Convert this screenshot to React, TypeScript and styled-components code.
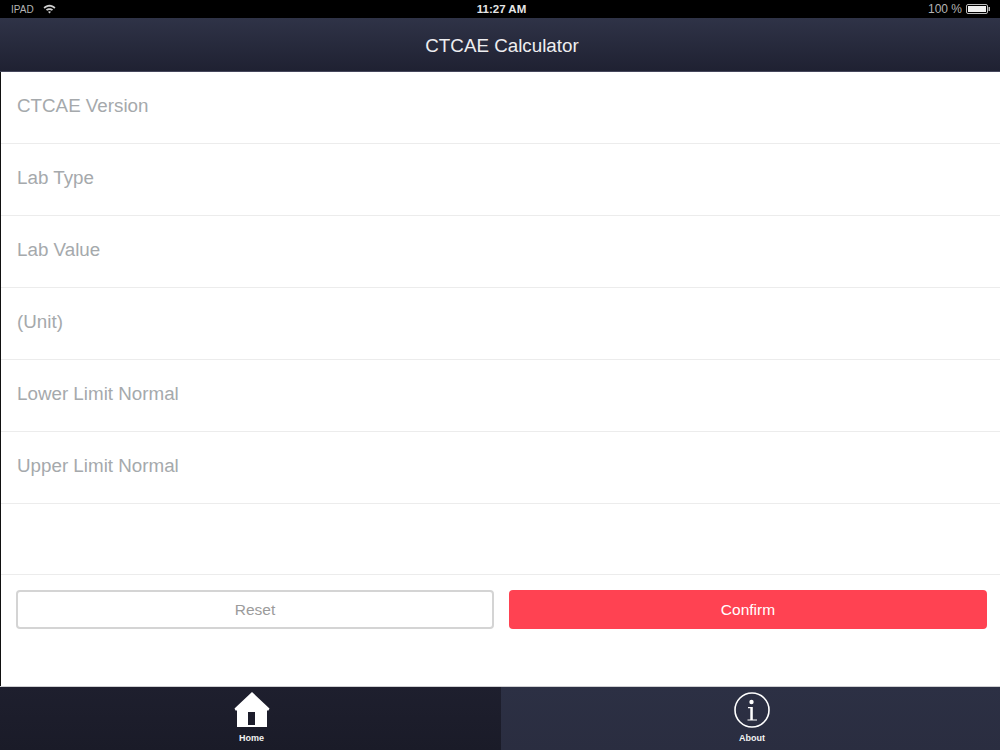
import styled, { createGlobalStyle } from 'styled-components';

const GlobalStyle = createGlobalStyle`
    html,
    body {
        margin: 0;
        padding: 0;
        background: #fff;
        font-family: 'Liberation Sans', Arial, sans-serif;
    }
`;

const Page = styled.div`
    width: 1000px;
    height: 750px;
    display: flex;
    flex-direction: column;
    overflow: hidden;
    background: #fff;
`;

const StatusBar = styled.div`
    height: 18px;
    background: #000;
    color: #b4b4b4;
    display: grid;
    grid-template-columns: 1fr auto 1fr;
    align-items: center;
    padding: 0 9px 0 11px;
    font-size: 10px;
    flex-shrink: 0;
`;

const StatusLeft = styled.div`
    display: flex;
    align-items: center;
    gap: 9px;
`;

const StatusRight = styled.div`
    display: flex;
    align-items: center;
    justify-content: flex-end;
    gap: 4px;
    font-size: 12px;
`;

const Clock = styled.div`
    color: #e6e6e6;
    font-size: 11.5px;
    font-weight: 700;
    padding-left: 1px;
`;

const NavBar = styled.header`
    height: 54px;
    flex-shrink: 0;
    box-sizing: border-box;
    background: linear-gradient(#2f3347, #1f2132);
    border-bottom: 1px solid #45475c;
    color: #eeeef0;
    font-size: 18.8px;
    display: flex;
    align-items: center;
    justify-content: center;
    padding: 2px 0 0 4px;
`;

const Body = styled.main`
    flex: 1;
    display: flex;
    flex-direction: column;
    border-left: 1px solid #111;
    min-height: 0;
`;

const Row = styled.div<{ $tall?: boolean }>`
    height: ${(p) => (p.$tall ? 71 : 72)}px;
    box-sizing: border-box;
    border-bottom: 1px solid #ececec;
    display: flex;
    align-items: center;
    padding: 0 16px 3px;
    color: #a5a9ac;
    font-size: 18.8px;
    flex-shrink: 0;
`;

const Actions = styled.div`
    display: grid;
    grid-template-columns: 478px 478px;
    gap: 15px;
    padding: 15px 0 0 15px;
`;

const Button = styled.button<{ $primary?: boolean }>`
    height: 39px;
    box-sizing: border-box;
    border-radius: 4px;
    border: ${(p) => (p.$primary ? '0' : '2px solid #d4d4d4')};
    background: ${(p) => (p.$primary ? '#ff4252' : '#fff')};
    color: ${(p) => (p.$primary ? '#fff' : '#9b9b9b')};
    font-family: inherit;
    font-size: 15.5px;
    padding: 0;
`;

const TabBar = styled.nav`
    height: 64px;
    flex-shrink: 0;
    box-sizing: border-box;
    border-top: 1px solid #cfcfd2;
    display: grid;
    grid-template-columns: 501px 499px;
`;

const Tab = styled.div<{ $active?: boolean }>`
    background: ${(p) => (p.$active ? 'linear-gradient(#1e1f2e, #1a1b28)' : 'linear-gradient(#2c3044, #2a2d40)')};
    display: flex;
    flex-direction: column;
    align-items: center;
    padding: 4px 0 0 ${(p) => (p.$active ? 2 : 3)}px;
    color: #f2f2f2;
    font-size: 9px;
    font-weight: 700;
`;

const TabIcon = styled.svg`
    width: 38px;
    height: 38px;
    display: block;
    margin-bottom: 4px;
`;

const fields = ['CTCAE Version', 'Lab Type', 'Lab Value', '(Unit)', 'Lower Limit Normal', 'Upper Limit Normal'];

export default function App() {
    return (
        <Page>
            <GlobalStyle />
            <StatusBar>
                <StatusLeft>
                    <span>IPAD</span>
                    <svg width="13" height="10" viewBox="0 0 13 10">
                        <path d="M0.5 3.4C4 0 9 0 12.5 3.4L11.2 4.7C8.4 2.1 4.6 2.1 1.8 4.7Z" fill="#d0d0d0" />
                        <path d="M2.9 5.6C5 3.7 8 3.7 10.1 5.6L8.9 6.8C7.4 5.6 5.6 5.6 4.1 6.8Z" fill="#d0d0d0" />
                        <path d="M5 7.7C5.9 7 7.1 7 8 7.7L6.5 9.4Z" fill="#d0d0d0" />
                    </svg>
                </StatusLeft>
                <Clock>11:27 AM</Clock>
                <StatusRight>
                    <span>100 %</span>
                    <svg width="25" height="10" viewBox="0 0 25 10">
                        <rect x="0.5" y="0.5" width="21" height="9" rx="1.5" fill="none" stroke="#bdbdbd" />
                        <rect x="2" y="2" width="18" height="6" fill="#f0f0f0" />
                        <rect x="22.5" y="3" width="1.5" height="4" fill="#bdbdbd" />
                    </svg>
                </StatusRight>
            </StatusBar>
            <NavBar>CTCAE Calculator</NavBar>
            <Body>
                {fields.map((field) => (
                    <Row key={field}>{field}</Row>
                ))}
                <Row $tall />
                <Actions>
                    <Button>Reset</Button>
                    <Button $primary>Confirm</Button>
                </Actions>
            </Body>
            <TabBar>
                <Tab $active>
                    <TabIcon viewBox="0 0 38 38">
                        <path
                            fillRule="evenodd"
                            d="M19 1L36.5 17.5L35.5 19.5H34V36H4V19.5H2.5L1.5 17.5ZM15 21V34H22V21Z"
                            fill="#fff"
                        />
                    </TabIcon>
                    Home
                </Tab>
                <Tab>
                    <TabIcon viewBox="0 0 38 38">
                        <circle cx="19" cy="19" r="17" fill="none" stroke="#fff" strokeWidth="1.6" />
                        <circle cx="18.5" cy="11" r="2.2" fill="#fff" />
                        <path d="M15 16H19.8V28.4H24V29.6H14.5V28.4H17.3V17.2H15Z" fill="#fff" />
                    </TabIcon>
                    About
                </Tab>
            </TabBar>
        </Page>
    );
}
